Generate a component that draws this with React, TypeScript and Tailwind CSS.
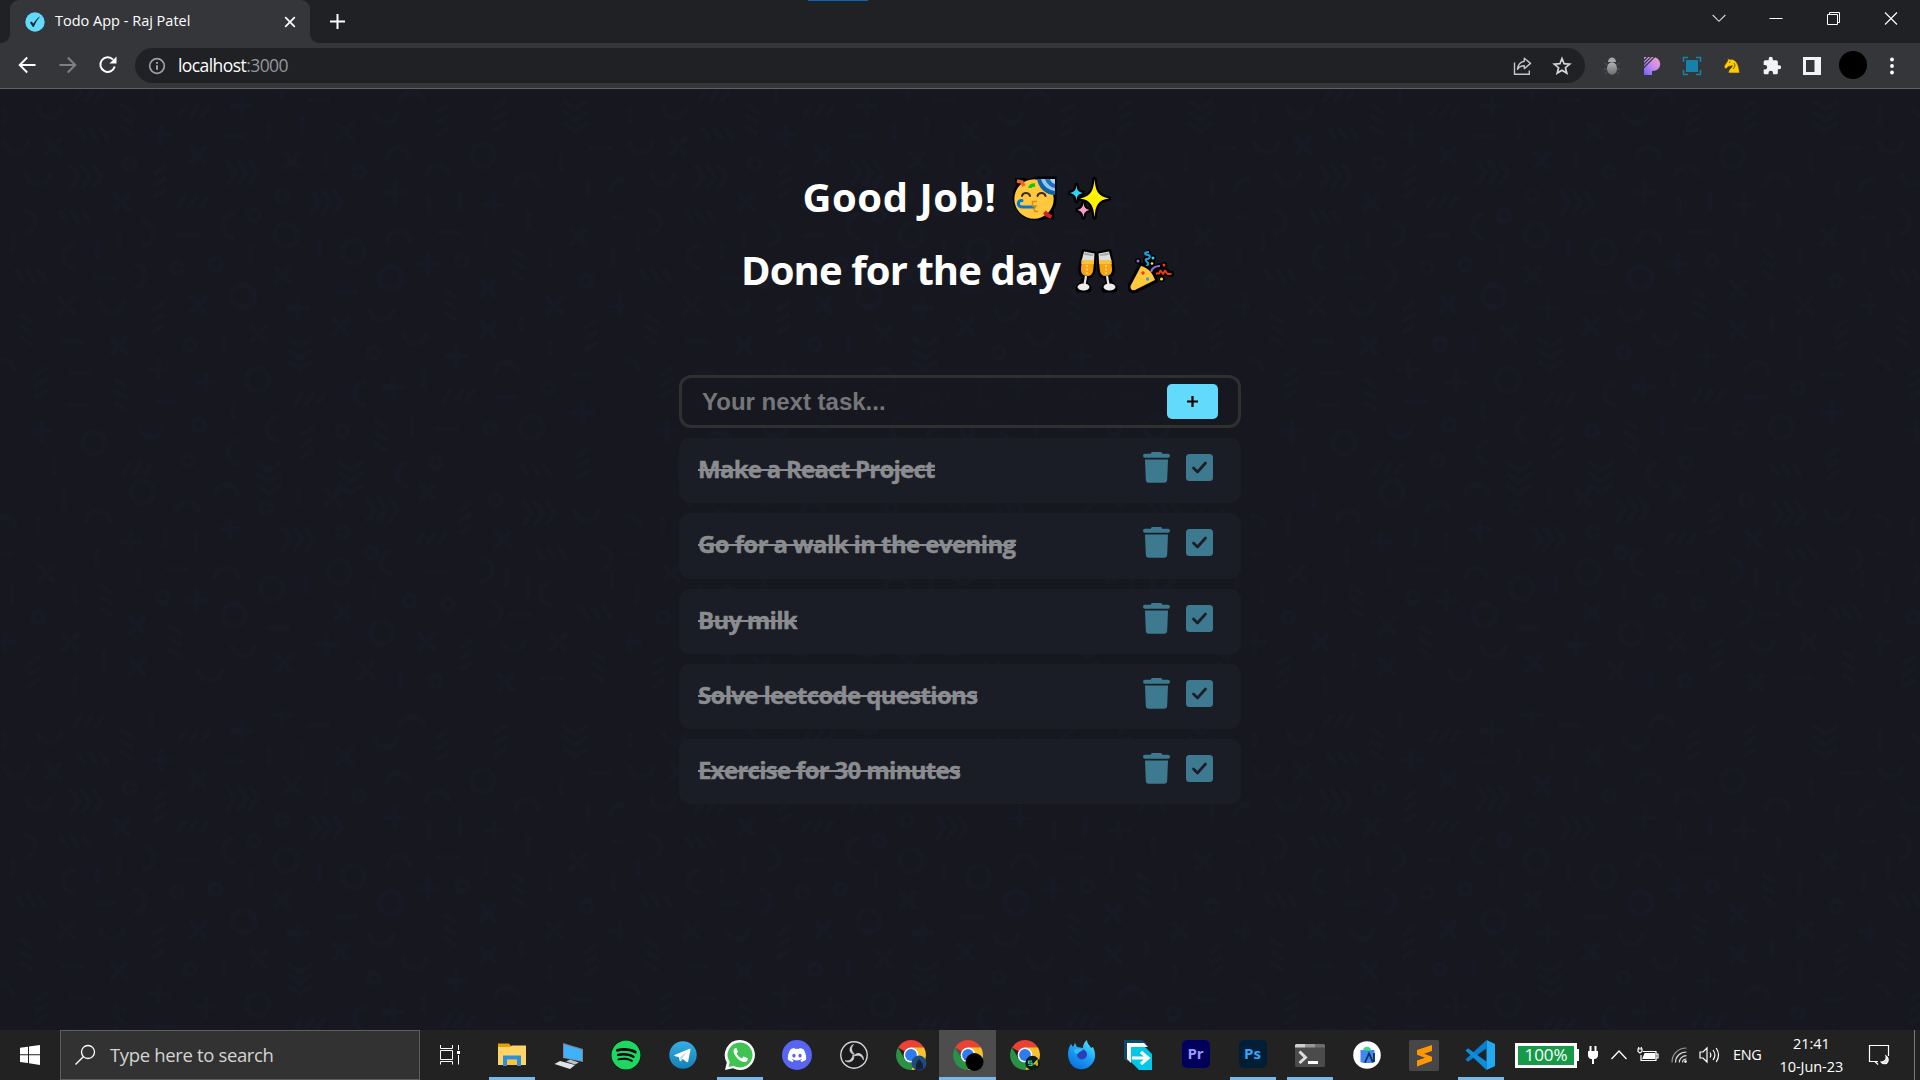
import React from "react";
import { FaDiscord, FaSpotify } from "react-icons/fa";

/* ------------------------------------------------------------------ */
/* Page background: faint geometric confetti, repeated every 625px     */
/* ------------------------------------------------------------------ */

type Mark = [kind: string, x: number, y: number];

const MARKS: Mark[] = [
  ["slash3", 268, 33], ["slash3", 584, 78], ["slash3", 580, 350], ["slash3", 930, 942], ["slash3", 1378, 932], ["slash3", 415, 1150],
  ["back3", 276, 145], ["back3", 223, 395], ["back3", 90, 572], ["back3", 1605, 1155],
  ["vback3", 380, 103], ["vback3", 80, 735], ["vback3", 362, 930], ["vback3", 1349, 660], ["vback3", 1142, 1053], ["vback3", 1555, 538],
  ["vslash3", 480, 290], ["vslash3", 1328, 105], ["vslash3", 475, 698], ["vslash3", 124, 893], ["vslash3", 921, 1073], ["vslash3", 1500, 92], ["vslash3", 1774, 750], ["vslash3", 1749, 1135],
  ["plus", 483, 150], ["plus", 725, 64], ["plus", 847, 15], ["plus", 1185, 323], ["plus", 1285, 537], ["plus", 894, 670], ["plus", 1180, 905], ["plus", 1370, 813], ["plus", 618, 891], ["plus", 476, 852], ["plus", 125, 1038], ["plus", 1482, 360], ["plus", 1860, 662], ["plus", 1747, 984],
  ["x", 160, 183], ["x", 593, 211], ["x", 876, 226], ["x", 1034, 138], ["x", 365, 352], ["x", 200, 661], ["x", 595, 659], ["x", 357, 783], ["x", 776, 747], ["x", 1022, 725], ["x", 848, 570], ["x", 1464, 611], ["x", 1464, 735], ["x", 1735, 455], ["x", 1664, 661],
  ["O", 859, 451], ["O", 1060, 500], ["O", 1172, 579], ["O", 731, 634], ["O", 773, 884], ["O", 282, 1074], ["O", 1448, 212], ["O", 1594, 1027],
  ["o", 388, 235], ["o", 846, 331], ["o", 762, 392], ["o", 1077, 260], ["o", 646, 538], ["o", 531, 548], ["o", 1387, 528], ["o", 570, 778], ["o", 1121, 803], ["o", 597, 1020], ["o", 1027, 1038], ["o", 1469, 1032], ["o", 564, 1127], ["o", 1307, 1133], ["o", 1760, 588], ["o", 1645, 910],
  ["cup", 150, 66], ["cup", 49, 170], ["cup", 115, 266], ["cup", 1157, 82], ["cup", 336, 655], ["cup", 1144, 672], ["cup", 1245, 744], ["cup", 452, 1024],
  ["cap", 1235, 52], ["cap", 1195, 220], ["cap", 1312, 274], ["cap", 1196, 470], ["cap", 5, 856], ["cap", 1581, 300], ["cap", 1865, 316], ["cap", 1521, 864],
  ["right", 74, 411], ["right", 430, 446], ["right", 404, 573], ["left", 222, 514], ["left", 700, 423], ["left", 1094, 926], ["left", 832, 1030], ["left", 716, 1102], ["left", 1222, 1170],
  ["chev", 258, 275], ["chev", 728, 264], ["chev", 980, 352], ["vchev", 900, 808], ["vchev", 1726, 94], ["vchev", 807, 1180], ["vchev", 1052, 1178],
  ["dash", 315, 580], ["dash", 218, 769], ["dash", 243, 864], ["dash", 234, 960], ["dash", 498, 951], ["dash", 1040, 620], ["dash", 1339, 1032], ["dash", 702, 154], ["dash", 957, 46], ["dash", 566, 451], ["dash", 1345, 442], ["dash", 1801, 189], ["dash", 1867, 397], ["dash", 1747, 869], ["dash", 1518, 936],
  ["bar", 14, 90], ["bar", 452, 33], ["bar", 807, 139], ["bar", 905, 123], ["bar", 977, 226], ["bar", 1286, 362], ["bar", 1379, 348], ["bar", 292, 498], ["bar", 356, 467], ["bar", 39, 472], ["bar", 672, 775], ["bar", 699, 978], ["bar", 1270, 882], ["bar", 1236, 1023], ["bar", 1458, 466], ["bar", 957, 490], ["bar", 754, 509], ["bar", 162, 1142], ["bar", 1683, 232], ["bar", 1762, 312], ["bar", 1585, 406], ["bar", 1650, 518], ["bar", 1564, 716], ["bar", 1650, 789], ["bar", 1840, 516],
];

const LOWER: Mark[] = MARKS.filter((m) => m[2] > 200 && m[2] < 800).map(
  (m) => [m[0], 1875 - m[1], m[2] + 1010] as Mark
);

const SHAPES: Record<string, string> = {
  plus: "M-34 0H34M0 -34V34",
  x: "M-24 -26L24 26M24 -26L-24 26",
  O: "M-34 0A34 34 0 1 0 34 0A34 34 0 1 0 -34 0",
  o: "M-17 0A17 17 0 1 0 17 0A17 17 0 1 0 -17 0",
  cup: "M-35 -3A35 35 0 0 0 35 -3",
  cap: "M-35 3A35 35 0 0 1 35 3",
  right: "M-3 -35A35 35 0 0 1 -3 35",
  left: "M3 -35A35 35 0 0 0 3 35",
  slash3: "M-48 18L-24 -18M-14 18L10 -18M20 18L44 -18",
  back3: "M-44 -18L-20 18M-10 -18L14 18M24 -18L48 18",
  vslash3: "M-18 -22L18 -46M-18 12L18 -12M-18 46L18 22",
  vback3: "M-18 -46L18 -22M-18 -12L18 12M-18 22L18 46",
  chev: "M-48 -36L-22 0L-48 36M-14 -36L12 0L-14 36M20 -36L46 0L20 36",
  vchev: "M-36 -48L0 -22L36 -48M-36 -14L0 12L36 -14M-36 20L0 46L36 20",
  dash: "M-33 0H33",
  bar: "M0 -27V27",
};

function Confetti() {
  return (
    <svg className="absolute inset-0 h-full w-full" aria-hidden="true">
      <defs>
        <pattern id="confetti" width="625" height="625" patternUnits="userSpaceOnUse" patternTransform="translate(0 -4)">
          <g transform="scale(.33333)" fill="none" stroke="#171a25" strokeWidth="12">
            {[...MARKS, ...LOWER].map(([k, x, y], i) => (
              <path key={i} d={SHAPES[k]} transform={`translate(${x} ${y})`} />
            ))}
          </g>
        </pattern>
      </defs>
      <rect width="100%" height="100%" fill="url(#confetti)" />
    </svg>
  );
}

/* ------------------------------------------------------------------ */
/* Browser window                                                      */
/* ------------------------------------------------------------------ */

function TabStrip() {
  return (
    <div className="relative flex h-[43px] bg-[#202124]">
      <div className="absolute left-[808px] top-0 h-px w-[60px] bg-[#0a66b8]" />
      <div className="flex w-[10px] items-end bg-[#35363a]">
        <div className="h-full w-full rounded-br-[9px] bg-[#202124]" />
      </div>
      <div className="flex w-[300px] items-center rounded-t-[9px] bg-[#35363a] pl-[15px] pr-[12px]">
        <svg width="20" height="20" viewBox="0 0 20 20">
          <circle cx="10" cy="10" r="9.7" fill="#61dafb" />
          <path d="M4.900 10.600l1.900-1.100 1.500 2.300C10 8.800 12 6.300 15.400 4c-2.800 3.200-4.700 6.400-6.500 10.700l-1 .3z" fill="#12262e" />
        </svg>
        <span className="ml-[10px] flex-1 whitespace-nowrap pb-px font-['Open_Sans'] text-[14.5px] leading-none tracking-[0px] text-white">Todo App - Raj Patel</span>
        <svg width="16" height="16" viewBox="0 0 16 16" stroke="#fff" strokeWidth="1.7"><path d="M3.200 3.200l9.600 9.600M12.800 3.200l-9.600 9.600" /></svg>
      </div>
      <div className="w-[10px] bg-[#35363a]"><div className="h-full w-full rounded-bl-[9px] bg-[#202124]" /></div>
      <svg className="ml-[9px] mt-[13px]" width="17" height="17" viewBox="0 0 17 17" stroke="#fff" strokeWidth="2"><path d="M8.500 1v15M1 8.500h15" /></svg>
      <div className="ml-auto flex items-start pt-[9px]">
        <svg className="mr-[37px]" width="20" height="20" viewBox="0 0 20 20" fill="none" stroke="#d6d7d9" strokeWidth="1.100"><path d="M3.700 6l6.300 6.300L16.300 6" /></svg>
        <svg className="mr-[38px]" width="20" height="20" viewBox="0 0 20 20" stroke="#fff"><path d="M3.500 9.500h13" /></svg>
        <svg className="mr-[37px]" width="20" height="20" viewBox="0 0 20 20" fill="none" stroke="#fff"><path d="M3.500 5.500h10v10h-10zM5.500 5.500v-2h10v10h-2" /></svg>
        <svg className="mr-[19px]" width="20" height="20" viewBox="0 0 20 20" stroke="#fff" strokeWidth="1.100"><path d="M4 3.500l12 12M16 3.500l-12 12" /></svg>
      </div>
    </div>
  );
}

function Toolbar() {
  return (
    <div className="flex h-[46px] items-center border-b border-[#5f6165] bg-[#35363a]">
      <svg className="mb-px ml-[17px]" width="20" height="20" viewBox="0 0 20 20" fill="none" stroke="#fff" strokeWidth="1.900"><path d="M18.500 10H3M10.200 2.500L2.700 10l7.500 7.500" /></svg>
      <svg className="mb-px ml-[21px]" width="20" height="20" viewBox="0 0 20 20" fill="none" stroke="#7f8083" strokeWidth="1.900"><path d="M1.500 10H17M9.800 2.500l7.500 7.500-7.500 7.500" /></svg>
      <svg className="mb-px ml-[20px]" width="20" height="20" viewBox="0 0 20 20" fill="none" stroke="#fff" strokeWidth="2"><path d="M15 4.600A7.300 7.300 0 1 0 16.700 11.500" /><path d="M18.500 1.500v7h-7z" fill="#fff" stroke="none" /></svg>
      <div className="ml-[17px] flex h-[35px] w-[1450px] items-center rounded-full bg-[#202124] pl-[13px] pr-[13px]">
        <svg width="18" height="18" viewBox="0 0 18 18" fill="none" stroke="#9aa0a6" strokeWidth="1.700"><circle cx="9" cy="9" r="7.300" /><path d="M9 8.200v4.600M9 5v1.800" strokeWidth="2" /></svg>
        <span className="ml-[12px] whitespace-nowrap font-['Open_Sans'] text-[17.500px] leading-none tracking-[-0.57px] text-white">localhost<span className="text-[#969799]">:3000</span></span>
        <svg className="ml-auto" width="20" height="20" viewBox="0 0 20 20" fill="none" stroke="#c4c5c7" strokeWidth="1.400"><path d="M2.500 6.500v11.700h14.800v-3.800" /><path d="M12.300 2.200l6.200 5.200-6.200 5.200V9.800c-3.400 0-5.400 1.300-6.800 3.500.5-4.400 3-7.400 6.800-8z" strokeLinejoin="round" /></svg>
        <svg className="ml-[20px]" width="20" height="20" viewBox="0 0 20 20" fill="none" stroke="#d5d6d8" strokeWidth="1.700"><path d="M10 2.600l2.100 5.100 5.600.4-4.300 3.600 1.400 5.400L10 14.200l-4.800 2.900 1.400-5.400L2.300 8.100l5.600-.4z" /></svg>
      </div>
      <div className="ml-[17px] flex items-center gap-[20px]">
        <svg width="20" height="20" viewBox="0 0 20 20">
          <defs><linearGradient id="bug" x2="0" y2="1"><stop offset="0" stopColor="#b4b4b4" /><stop offset="1" stopColor="#6d6d6d" /></linearGradient></defs>
          <path d="M6 6c0-6 8-6 8 0z" fill="#a9a9a9" /><ellipse cx="10" cy="12.500" rx="5" ry="6.200" fill="url(#bug)" />
          <path d="M2.500 7l3 2M2 13h3M3 18l2.500-2.500M17.500 7l-3 2M18 13h-3M17 18l-2.500-2.500" stroke="#5a5a5c" />
        </svg>
        <svg width="20" height="20" viewBox="0 0 20 20">
          <defs><linearGradient id="pp" x1="1" x2="0" y2="1"><stop offset="0" stopColor="#f9a3c4" /><stop offset=".5" stopColor="#c48af0" /><stop offset="1" stopColor="#6a62f5" /></linearGradient></defs>
          <path d="M2 1h9a7.200 7 0 0 1 0 14h-1v4H2z" fill="url(#pp)" /><path d="M1 5.500l6-6M1 9L10.500 -.5M1 12.500L14 -.5" stroke="#35363a" strokeWidth="1.100" />
        </svg>
        <svg width="20" height="20" viewBox="0 0 20 20" fill="none" stroke="#1582ab" strokeWidth="1.500"><path d="M1.500 6V1.500H6M14 1.500h4.500V6M18.500 14v4.500H14M6 18.500H1.500V14" /><path d="M4 4h12v12H4z" fill="#1582ab" stroke="none" /></svg>
        <svg width="20" height="20" viewBox="0 0 20 20"><path d="M6 4l-.3-1.500L8 3.500c5-1 9 4 9.500 13.500H6.500c0-3 1.500-4 3.500-6l.3-1.500C9 10.500 7.500 10 6 10.800L4 13l-1.800-1.500C2 9 4.500 7.500 6 4z" fill="#fc0" stroke="#4a3f18" strokeWidth=".6" /><path d="M7 6.500l1.500-.5M12 7c1.500 2.500 1 4-1 6" stroke="#5c4a08" strokeWidth=".9" fill="none" /></svg>
        <svg width="20" height="20" viewBox="0 0 24 24" fill="#f1f3f4"><path d="M20.500 11H19V7c0-1.100-.9-2-2-2h-4V3.500a2.500 2.500 0 0 0-5 0V5H4c-1.100 0-2 .9-2 2v3.800h1.500a2.700 2.700 0 0 1 0 5.400H2V20c0 1.100.9 2 2 2h3.800v-1.500a2.700 2.700 0 0 1 5.400 0V22H17c1.100 0 2-.9 2-2v-4h1.500a2.500 2.500 0 0 0 0-5z" /></svg>
        <svg width="20" height="20" viewBox="0 0 20 20"><path d="M1 1h18v18H1z" fill="#f1f3f4" /><path d="M4 4h8.500v12H4z" fill="#35363a" /></svg>
        <div className="-ml-[3px] mb-px h-[28px] w-[28px] rounded-full bg-black" />
        <svg className="-ml-[5px]" width="20" height="20" viewBox="0 0 20 20" fill="#fff"><circle cx="10" cy="3.500" r="1.900" /><circle cx="10" cy="10" r="1.900" /><circle cx="10" cy="16.500" r="1.900" /></svg>
      </div>
    </div>
  );
}

/* ------------------------------------------------------------------ */
/* Emoji                                                               */
/* ------------------------------------------------------------------ */

function PartyFace() {
  return (
    <svg width="48" height="48" viewBox="0 0 48 48">
      <path d="M4 3h9l5 1 9-2.500h18.500V25c0 4-1 7-3 10l.5 9.500-8-1c-14 5.500-30-1.500-33-16.500-1-7 0-12 3-16z" fill="#000" />
      <circle cx="23" cy="24" r="19.700" fill="#ffc83d" />
      <path d="M26 4h18v16c-9 0-16-6-18-16z" fill="#0f62ab" />
      <path d="M30 4h14v12c-7-1-12-5-14-12z" fill="#8fc6f2" /><path d="M34 4h10v9c-5-1-8-4-10-9z" fill="#1f6fba" /><path d="M39 4h5v5c-3-1-4-2-5-5z" fill="#a5d3f7" />
      <path d="M6 6l5 1 2 4" fill="none" stroke="#f0642a" strokeWidth="3.500" />
      <path d="M33.500 37l3 3 4 2" fill="none" stroke="#d3202b" strokeWidth="4" />
      <path d="M19 13c0-2 2-3 5-3" fill="none" stroke="#16c60c" strokeWidth="3.500" />
      <path d="M11 21c1-4 7-4 8 0M26.500 21c1-4 7-4 8 0" fill="none" stroke="#40291a" strokeWidth="2" strokeLinecap="round" />
      <path d="M23 32H12c-6 0-6-7-1-6.500" fill="none" stroke="#0078d7" strokeWidth="3" strokeLinecap="round" />
      <path d="M26 26.500h-4.500v4.500h3.500l-2 3 1 2.500h3" fill="none" stroke="#d98a1b" strokeWidth="1.500" />
    </svg>
  );
}

function Sparkles() {
  const big = "M27.500 4c1 12 3.500 17.500 14.500 19.500-11 1.500-13.500 6.500-14.500 19-1-12.500-4-17.500-14.500-19 10.500-2 13.500-7.500 14.500-19.500z";
  const s1 = "M9.500 10c.5 5 1.500 7 6.500 8-5 1-6 3-6.500 8C9 21 7.500 19 3 18c4.500-1 6-3 6.500-8z";
  const s2 = "M16.500 27.500c.5 4.500 1.500 6.500 6 7.500-4.500 1-5.500 3-6 7.500-.5-4.500-2-6.500-6-7.500 4-1 5.500-3 6-7.500z";
  return (
    <svg width="48" height="48" viewBox="0 0 48 48">
      <g fill="#000" stroke="#000" strokeWidth="4.500" strokeLinejoin="round"><path d={big} /><path d={s1} /><path d={s2} /></g>
      <path d={big} fill="#fff100" /><path d={s1} fill="#31d2f7" /><path d={s2} fill="#f9a0c8" />
    </svg>
  );
}

function Glass() {
  return (
    <g>
      <path d="M7.500 3l11 2.500-1 17c-.5 4-2.500 6-5.500 6h-1l-1.500 8c4 1 5 4 3.500 6H2c-1-3 0-6 4-6.500L8 28c-3-1-4-4-4-7z" fill="#000" stroke="#000" strokeWidth="4" strokeLinejoin="round" />
      <path d="M8 3.500l10.500 2L18 13H5.500z" fill="#dcdcdc" /><path d="M5.800 12h12.300l-.9 10c-.5 4-2.500 6-5.700 6-4.500 0-7-3-6.500-7.500z" fill="#f5a214" /><path d="M5.800 12h12.300l-.4 4H5.300z" fill="#f9c23c" />
      <path d="M11 17v9" stroke="#ffdf8b" strokeWidth="1.500" strokeDasharray="2 1.500" /><path d="M10 28l-1.500 9" stroke="#e6e6e6" strokeWidth="2.200" /><ellipse cx="7.500" cy="39" rx="6" ry="3.500" fill="#ececec" /><path d="M8 4.500l9.500 2-1 1.500-8-1z" fill="#a9a9a9" />
    </g>
  );
}

function Clink() {
  return (
    <svg width="48" height="48" viewBox="0 0 48 48">
      <g transform="translate(2 0)"><Glass /></g>
      <g transform="translate(43 0) scale(-1 1)"><Glass /></g>
    </svg>
  );
}

function Popper() {
  const cone = "M13 18c7 2 11 6 14 14L7 42c-3 1-5-1-4.500-4z";
  return (
    <svg width="48" height="48" viewBox="0 0 48 48" fill="none">
      <g stroke="#000" strokeWidth="6" strokeLinejoin="round" strokeLinecap="round">
        <path d={cone} fill="#000" /><path d="M20 5c-4 2 2 4-1 6s1 4 0 6M24 23c1-3 4-5 8-5M29 26c3-5 4 1 6-1s2-4 4-1 2 2 4 2M10 13h.1M25 10h.1M36 17h.1M34 31h.1M24 15h.1" />
      </g>
      <path d={cone} fill="#ffc83d" />
      <path d="M21 4c-6 0-4 3-1 3s2 4-1 4 0 3 1 4-1 2-1 3" stroke="#18a6e0" strokeWidth="2" />
      <path d="M23 24c1-4 4-6 9-6" stroke="#886ce4" strokeWidth="2.200" />
      <path d="M28 25.500h3l1.500-3 2.500 3.500 2-3.500 2.500 3.500h4" stroke="#f03a17" strokeWidth="1.900" strokeLinejoin="round" />
      <circle cx="10" cy="13" r="1.500" fill="#886ce4" /><circle cx="25" cy="10" r="1.500" fill="#31d2f7" /><circle cx="24" cy="15.500" r="1.300" fill="#fff100" /><circle cx="36" cy="17" r="1.500" fill="#f03a17" /><circle cx="33.500" cy="31" r="1.500" fill="#fff100" />
      <circle cx="15" cy="25" r="1.700" fill="#f03a17" /><circle cx="19.500" cy="31" r="1.700" fill="#31a6d7" />
    </svg>
  );
}

/* ------------------------------------------------------------------ */
/* Todo app                                                            */
/* ------------------------------------------------------------------ */

const TASKS: [string, string][] = [
  ["Make a React Project", "tracking-[-0.75px]"],
  ["Go for a walk in the evening", "tracking-[-0.6px]"],
  ["Buy milk", "tracking-[-0.75px]"],
  ["Solve leetcode questions", "tracking-[-0.68px]"],
  ["Exercise for 30 minutes", "tracking-[-0.7px]"],
];

function TaskRow({ text, tracking }: { text: string; tracking: string }) {
  return (
    <li className="flex h-[65.300px] items-center rounded-[11px] bg-[#1b1e27]/90 pl-[19px] pr-[28px]">
      <span className={`flex-1 pb-[3px] font-['Open_Sans'] text-[24px] font-bold leading-none text-[#8b8c8f] [-webkit-text-stroke:0.4px_#8b8c8f] ${tracking}`}>
        <span className="relative inline-block whitespace-nowrap">
          {text}
          <span className="absolute left-0 right-0 top-[12px] h-[2px] bg-[#8b8c8f]" />
        </span>
      </span>
      <svg className="mb-[6px]" width="27" height="31" viewBox="0 0 27 31" fill="#3d7a8f">
        <path d="M9.500 0h8c.8 0 1.400.6 1.700 1.700H25a2 2 0 0 1 0 4H2a2 2 0 0 1 0-4h5.800C8.100.6 8.700 0 9.500 0z" />
        <path d="M2 7.500h23l-.8 20.300c-.1 2-1.200 3-3 3H5.800c-1.800 0-2.900-1-3-3z" />
      </svg>
      <svg className="mb-[6px] ml-[16px]" width="27" height="27" viewBox="0 0 27 27">
        <rect width="27" height="27" rx="3.500" fill="#3d7a8f" />
        <path d="M7.500 14l4 4 8-9" fill="none" stroke="#1b1e27" strokeWidth="2.700" strokeLinecap="round" strokeLinejoin="round" />
      </svg>
    </li>
  );
}

function TodoPage() {
  return (
    <main className="relative flex-1 overflow-hidden bg-[#17181f]">
      <Confetti />
      <div className="relative flex flex-col items-center pt-[71px]">
        <h1 className="flex flex-col items-center font-['Open_Sans'] text-[40px] font-bold leading-[73px] text-white">
          <span className="flex items-center pr-[2px]">
            <span className="tracking-[0.55px]">Good Job!</span>
            <span className="ml-[15px] mt-[4px] flex gap-[8px]"><PartyFace /><Sparkles /></span>
          </span>
          <span className="flex items-center pr-[3px]">
            <span className="tracking-[-0.9px]">Done for the day</span>
            <span className="ml-[14px] mt-[4px] flex gap-[6px]"><Clink /><Popper /></span>
          </span>
        </h1>
        <div className="mt-[69px] flex h-[53px] w-[562px] items-center rounded-[12px] border-[3px] border-[#2f3030] bg-[#17181f]/50 pl-[20px] pr-[20px]">
          <span className="flex-1 font-['Liberation_Sans'] text-[24px] font-bold leading-none text-[#757678]">Your next task...</span>
          <button className="flex h-[35px] w-[51px] items-center justify-center rounded-[5px] bg-[#61dafb]">
            <svg className="mb-px" width="11" height="11" viewBox="0 0 11 11" stroke="#000" strokeWidth="2.200"><path d="M5.500 0v11M0 5.500h11" /></svg>
          </button>
        </div>
        <ul className="mt-[10px] flex w-[562px] flex-col gap-[10px]">
          {TASKS.map(([t, tr]) => <TaskRow key={t} text={t} tracking={tr} />)}
        </ul>
      </div>
    </main>
  );
}

/* ------------------------------------------------------------------ */
/* Taskbar                                                             */
/* ------------------------------------------------------------------ */

function Chrome({ children }: { children?: React.ReactNode }) {
  return (
    <svg width="32" height="32" viewBox="0 0 32 32">
      <path d="M16 16L3.010 8.500A15 15 0 0 1 28.990 8.500z" fill="#ea4335" />
      <path d="M16 8.500H28.990A15 15 0 0 1 16 31l6.500-11.300z" fill="#fbc02d" />
      <path d="M3.010 8.500L9.500 19.700L16 23L22.500 19.700L16 31A15 15 0 0 1 3.010 8.500z" fill="#2a9145" />
      <circle cx="16" cy="16" r="7.400" fill="#fff" /><circle cx="16" cy="16" r="5.900" fill="#3079ee" />
      {children}
    </svg>
  );
}

const S = { width: 32, height: 32, viewBox: "0 0 32 32" };

const Explorer = () => (
  <svg {...S}><path d="M2 4.500h11l2 2.500v3H2z" fill="#e3a008" /><path d="M2 8h12l2-1.500h14V26H2z" fill="#ffd466" /><path d="M7 16.500h18V27h-4v-6.500H11V27H7z" fill="#2f8fd6" /><path d="M11 21h10v5H11z" fill="#ffc233" /></svg>
);
const RemotePC = () => (
  <svg {...S}><path d="M10 4l20 6v13l-20-4z" fill="#7a8791" /><path d="M11 5.500l18 5.500v11l-18-3.700z" fill="#3fb2fb" /><path d="M17 20.500l9 3-4 2-9-3z" fill="#b9c2c9" /><path d="M7 22l15 4-5 4L1.500 25z" fill="#dfe5e9" /></svg>
);
const Spotify = () => (
  <span className="flex h-[30px] w-[30px] items-center justify-center rounded-full bg-black"><FaSpotify size={30} color="#1ed760" /></span>
);
const Telegram = () => (
  <svg {...S}><defs><linearGradient id="tg" x2="0" y2="1"><stop offset="0" stopColor="#37aee2" /><stop offset="1" stopColor="#1380b8" /></linearGradient></defs><circle cx="16" cy="16" r="13.700" fill="url(#tg)" /><path d="M7.500 16l15-6.200c.8-.3 1.200.1 1 1l-2.300 11.500c-.2 1-.8 1.200-1.500.7l-4-3-2 2c-.5.400-.9.300-1-.3l-.7-3.500-4.300-1.300c-.6-.2-.7-.6-.2-.9z" fill="#fff" /><path d="M13 18.500l7-6-5.300 7.200-.4 3z" fill="#b8d3e6" /></svg>
);
const WhatsApp = () => (
  <svg {...S}><path d="M16 1a15 15 0 1 1-7 28.300L1 31l1.800-7.500A15 15 0 0 1 16 1z" fill="#fff" /><path d="M16 3.500a12.500 12.500 0 1 1-6.300 23.300L4.500 28l1.200-5A12.500 12.500 0 0 1 16 3.500z" fill="#3fc351" /><path d="M11.300 9c-2 1-2.300 3.300-1 6 1.800 3.700 4.600 6.300 8.200 7.700 2.800 1 4.600 0 5.200-2 .2-.8.100-1.300-.5-1.600l-3-1.400c-.5-.2-.9-.1-1.200.3l-1.200 1.400c-2.300-.9-4-2.500-5.200-4.800l1-1.400c.3-.4.300-.8.100-1.200l-1.200-2.700c-.3-.5-.6-.5-1.200-.3z" fill="#fff" /></svg>
);
const Discord = () => (
  <span className="flex h-[30px] w-[30px] items-center justify-center rounded-full bg-[#5865f2]"><FaDiscord size={20} color="#fff" /></span>
);
const Obs = () => (
  <svg {...S} fill="none" stroke="#d6d6d6">
    <circle cx="16" cy="16" r="13.200" fill="#1b1a1d" strokeWidth="1.400" />
    {[0, 120, 240].map((r) => (
      <path key={r} transform={`rotate(${r} 16 16)`} d="M16 15.500c-3-1-4.500-3-4-5.500.3-2.200 1.500-3.500 3.500-4.500-1.500 1.800-2.200 3.200-1.800 5.200.3 2 1.300 3.300 2.800 4.300z" fill="#d6d6d6" strokeWidth=".7" />
    ))}
  </svg>
);
const Firefox = () => (
  <svg {...S}><defs><linearGradient id="ff" x1=".8" x2=".2" y2="1"><stop offset="0" stopColor="#4fe6ff" /><stop offset=".5" stopColor="#1b9df5" /><stop offset="1" stopColor="#0a6de0" /></linearGradient></defs><path d="M5 5l2 3 2-4 2 4 6 1c0-3 1-6 4-8 0 4 3 5 4 8l2-1c4 8 2 15-3 19-6 5-15 4-19-2S1 11 5 5z" fill="url(#ff)" /><circle cx="16" cy="15.500" r="5" fill="#2a3fb5" /><path d="M8 11c3-2 6-2 9 0-2 2-4 1-5 4-2 0-4-1-4-4z" fill="#31bdf9" /></svg>
);
const FileSend = () => (
  <svg {...S}><path d="M1 1h18l5 4H5v18l-4-3z" fill="#0d4a6b" /><path d="M4 4h17l4 4H8v16l-4-4z" fill="#fff" /><path d="M8 8h14l7 7v16H16l-8-8z" fill="#00c8e6" /><path d="M9 19h15M18 13l7 6-7 6" stroke="#fff" strokeWidth="3.200" fill="none" /></svg>
);
const Adobe = ({ t, bg, fg }: { t: string; bg: string; fg: string }) => (
  <span className={`flex h-[28px] w-[28px] items-center justify-center rounded-[5px] pb-[2px] font-['Open_Sans'] text-[15px] font-bold leading-none -mt-[2px] ${bg} ${fg}`}>{t}</span>
);
const Terminal = () => (
  <svg {...S}><rect x="1" y="5" width="30" height="23" rx="1.500" fill="#4b4b4b" /><path d="M1 8.500V6.500A1.500 1.500 0 0 1 2.500 5H11v3.500z" fill="#cfcfcf" /><path d="M11 5h10v3.500H11z" fill="#979797" /><path d="M21 5h8.500A1.500 1.500 0 0 1 31 6.500v2H21z" fill="#6e6e6e" /><path d="M5.500 12.500l6 6-6 5.500" fill="none" stroke="#ddd" strokeWidth="3" /><path d="M14 22h10v3H14z" fill="#fff" /></svg>
);
const AndroidStudio = () => (
  <svg {...S}><circle cx="16" cy="16" r="13.800" fill="#fff" /><path d="M9.500 11h14v12l-3 1h-8l-3-1z" fill="#4285f4" /><path d="M12 11.500c0-5 8-5 8 0z" fill="#3ddc84" /><path d="M14 23.500l4-9 4 9M23 14v9" stroke="#0b3050" strokeWidth="1.800" fill="none" /></svg>
);
const Sublime = () => (
  <svg {...S}><rect x="1" y="1" width="30" height="31" rx="2" fill="#474747" /><path d="M24 6v6l-8 2.700 8 3V22L9 27.500v-6l8-2.800-8-3V11z" fill="#ff9800" /></svg>
);
const VSCode = () => (
  <svg {...S} viewBox="1 0 32 32"><path d="M22.500 1L31 5v22l-8.500 4z" fill="#23a9f2" /><path d="M22.500 1L1.500 20.500l2.500 2.300L23 9z" fill="#0a7fd0" /><path d="M22.500 31L1.500 11.500 4 9.200 23 23z" fill="#0f8ddd" /></svg>
);

type TaskbarApp = { icon: React.ReactNode; open?: boolean; active?: boolean };
const APPS: TaskbarApp[] = [
  { icon: <Explorer />, open: true },
  { icon: <RemotePC /> },
  { icon: <Spotify /> },
  { icon: <Telegram /> },
  { icon: <WhatsApp />, open: true },
  { icon: <Discord /> },
  { icon: <Obs /> },
  { icon: <Chrome><circle cx="24" cy="24" r="7.500" fill="#1f4b7d" /><path d="M21 31v-6l3-5 4 5v5z" fill="#14213a" /><path d="M17 29l3 2h-2z" fill="#f5c518" /></Chrome> },
  { icon: <Chrome><circle cx="22.500" cy="23" r="9" fill="#000" /></Chrome>, active: true },
  { icon: <Chrome><circle cx="23.500" cy="24" r="7.200" fill="#0c1a1a" /><path d="M23 22.200h-3.500v2H23v2.200h-3.500" stroke="#27d69b" strokeWidth="1.300" fill="none" /><path d="M28 27v-5.500l-3 3.500h4" stroke="#f3d21b" strokeWidth="1.200" fill="none" /></Chrome> },
  { icon: <Firefox /> },
  { icon: <FileSend /> },
  { icon: <Adobe t="Pr" bg="bg-[#00005b]" fg="text-[#9999ff]" /> },
  { icon: <Adobe t="Ps" bg="bg-[#001e36]" fg="text-[#31a8ff]" />, open: true },
  { icon: <Terminal />, open: true },
  { icon: <AndroidStudio /> },
  { icon: <Sublime /> },
  { icon: <VSCode />, open: true },
];

function Taskbar() {
  return (
    <footer className="flex h-[50px] bg-[#222]">
      <div className="flex w-[60px] items-center justify-center">
        <svg width="20" height="20" viewBox="0 0 20 20" fill="#fff"><path d="M0 2.800L8 1.700v7.600H0zM9 1.500L20 0v9.300H9zM0 10.200h8v7.900l-8-1.100zM9 10.200h11V20L9 18.300z" /></svg>
      </div>
      <div className="flex w-[360px] items-center border border-[#5e5e5e] bg-[#323232] pl-[13px]">
        <svg width="22" height="22" viewBox="0 0 22 22" fill="none" stroke="#fff" strokeWidth="1.300"><circle cx="14" cy="8" r="6.500" /><path d="M9.300 12.700L1.500 20.500" /></svg>
        <span className="ml-[14px] font-['Open_Sans'] text-[18.500px] leading-none tracking-[-0.35px] text-[#d4d4d4]">Type here to search</span>
      </div>
      <div className="flex w-[63px] items-center pl-[19px]">
        <svg width="22" height="20" viewBox="0 0 22 20" fill="none" stroke="#fff"><path d="M1.500 0v3.500h12V0M1.500 5.500h12v9h-12zM1.500 19.500v-3h12v3M19.500 0v5M19.500 10v9.500" /><path d="M18 6h3v3h-3z" fill="#fff" stroke="none" /></svg>
      </div>
      {APPS.map((a, i) => (
        <div key={i} className={`relative flex w-[57px] shrink-0 items-center justify-center ${a.active ? "bg-[#4d4d4d]" : ""}`}>
          {a.icon}
          {a.active && <div className="absolute bottom-0 left-0 h-[3px] w-full bg-[#76b9ed]" />}
          {a.open && <div className="absolute bottom-0 left-[6px] h-[3px] w-[46px] bg-[#76b9ed]" />}
        </div>
      ))}
      <div className="mr-[5px] flex flex-1 items-center border-r border-[#7a7a7a] font-['Open_Sans'] text-white">
        <div className="ml-[6px] flex h-[25px] w-[62px] shrink-0 items-center justify-center border-[3px] border-white bg-[#169a48] pb-px text-[17px] leading-none tracking-[-0.1px]">100%</div>
        <div className="h-[12px] w-[2px] bg-white" />
        <svg className="ml-[8px]" width="12" height="18" viewBox="0 0 12 18" fill="#fff"><path d="M2.500 0h2v5h3V0h2v5H11v4c0 2.500-1.500 4-4 4.300V18H5v-4.700C2.500 13 1 11.500 1 9V5h1.500z" /></svg>
        <svg className="ml-[11px]" width="18" height="18" viewBox="0 0 18 18" fill="none" stroke="#fff" strokeWidth="1.300"><path d="M1.500 13L9 5l7.500 8" /></svg>
        <svg className="ml-[9px]" width="22" height="18" viewBox="0 0 22 18" fill="none" stroke="#fff" strokeWidth="1.200"><path d="M6 5.500h13v9H4V9M19.500 8h1.500v4h-1.500" /><path d="M8 7.500h9.500v5H6z" fill="#fff" /><path d="M1 3h4v2.500L3 7 1 5.500zM1.700 3V1M4.300 3V1" /></svg>
        <svg className="ml-[12px]" width="17" height="18" viewBox="0 0 17 18" fill="none" stroke="#ddd" strokeWidth="1.200"><path d="M1 16.500C1 8 7 2 15.500 2" stroke="#999" /><path d="M4.500 16.500c0-6 4.500-10.500 11-10.500M8.300 16.500c0-4 3-6.800 7.200-6.800M11.500 16.500c0-2 1.500-3.500 4-3.500" /><circle cx="14.500" cy="15.500" r="1.300" fill="#fff" stroke="none" /></svg>
        <svg className="ml-[11px]" width="22" height="18" viewBox="0 0 22 18" fill="none" stroke="#fff" strokeWidth="1.200"><path d="M1 6h3l4-4v14l-4-4H1zM11 6.500c1 1.500 1 3.500 0 5M14 4c2.300 3 2.300 7 0 10M17.200 2c3 4.500 3 9.500 0 14" /></svg>
        <span className="ml-[12px] text-[14.500px] leading-none tracking-[-0.4px]">ENG</span>
        <div className="ml-[18px] flex w-[64px] shrink-0 flex-col items-center whitespace-nowrap text-[14.500px] leading-[23px] tracking-[-0.05px]"><span>21:41</span><span>10-Jun-23</span></div>
        <svg className="ml-[25px]" width="22" height="22" viewBox="0 0 22 22" fill="none" stroke="#fff" strokeWidth="1.200"><path d="M10 17.500H1.500v-16h19V12" /><path d="M7 17.500l3 3" /><path d="M18 12c1 3-1 6-5 6 1.500 2.500 6 2.500 7-1 .5-2-.5-4-2-5z" fill="#ddd" /></svg>
      </div>
    </footer>
  );
}

export default function App() {
  return (
    <div className="flex h-[1080px] w-[1920px] flex-col overflow-hidden">
      <TabStrip />
      <Toolbar />
      <TodoPage />
      <Taskbar />
    </div>
  );
}
